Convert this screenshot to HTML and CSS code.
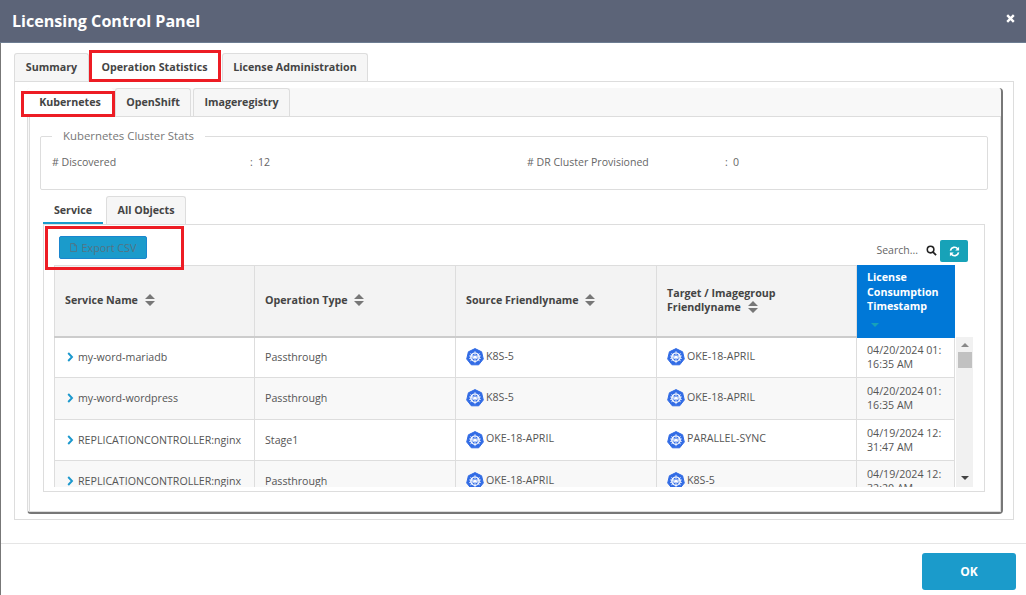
FILE: index.html
```html
<!DOCTYPE html>
<html lang="en">
<head>
<meta charset="utf-8">
<title>Licensing Control Panel</title>
<link rel="stylesheet" href="styles.css">
</head>
<body>
<svg class="defs" aria-hidden="true">
  <symbol id="k8s" viewBox="0 0 18 18">
    <path d="M9 .6 15.6 3.8 17.3 11 12.7 16.8H5.3L.7 11 2.4 3.8Z" fill="#326ce5" stroke="#326ce5" stroke-width="1" stroke-linejoin="round"/>
    <g fill="none" stroke="#fff">
      <circle cx="9" cy="9.2" r="4.2" stroke-width="1.2"/>
      <path d="M9 3.2V15.2M4.3 5.5 13.7 12.9M13.7 5.5 4.3 12.9M3.2 10.5 14.8 7.9M14.8 10.5 3.2 7.9" stroke-width=".8"/>
    </g>
    <circle cx="9" cy="9.2" r="1.2" fill="#fff"/>
  </symbol>
  <symbol id="sort" viewBox="0 0 10 12">
    <path d="M5 0 10 5H0ZM0 7H10L5 12Z" fill="#777"/>
  </symbol>
  <symbol id="chev" viewBox="0 0 7 10">
    <path d="M1.2 1 5 5 1.2 9" fill="none" stroke="#1b98cd" stroke-width="1.9"/>
  </symbol>
</svg>
<div class="modal">
  <header class="modal-header">
    <h1 class="modal-title">Licensing Control Panel</h1>
    <svg class="close" viewBox="0 0 9 9" aria-label="Close"><path d="M1.2 1.2 7.8 7.8M7.8 1.2 1.2 7.8" stroke="#fff" stroke-width="2.4"/></svg>
  </header>
  <main class="modal-body">
    <nav class="tabs">
      <a class="tab tab-summary">Summary</a>
      <a class="tab tab-op active">Operation Statistics<span class="mark"></span></a>
      <a class="tab tab-lic">License Administration</a>
    </nav>
    <section class="outer-panel">
      <div class="inner">
        <nav class="tabs sub-tabs">
          <a class="tab tab-k8s active-plain">Kubernetes<span class="mark mark-k8s"></span></a>
          <a class="tab tab-os">OpenShift</a>
          <a class="tab tab-img">Imageregistry</a>
        </nav>
        <div class="inner-content">
          <fieldset class="stats">
            <legend>Kubernetes Cluster Stats</legend>
            <div class="stats-grid">
              <div class="stat"><span class="stat-label"># Discovered</span><span class="stat-sep">:</span><span>12</span></div>
              <div class="stat"><span class="stat-label"># DR Cluster Provisioned</span><span class="stat-sep">:</span><span>0</span></div>
            </div>
          </fieldset>
          <nav class="tabs svc-tabs">
            <a class="tab tab-svc active">Service</a>
            <a class="tab tab-all">All Objects</a>
          </nav>
          <div class="svc-panel">
            <div class="toolbar">
              <button class="btn-export">
                <svg class="file-ic" viewBox="0 0 8 10"><path d="M.5.5H5L7.5 3V9.5H.5ZM5 .5V3H7.5" fill="none" stroke="#527484"/></svg>
                Export CSV
              </button>
              <span class="mark mark-export"></span>
              <span class="search">Search...</span>
              <svg class="search-ic" viewBox="0 0 12 12"><circle cx="5" cy="5" r="3.6" fill="none" stroke="#222" stroke-width="1.7"/><path d="M7.7 7.7 11 11" stroke="#222" stroke-width="2"/></svg>
              <button class="btn-refresh" aria-label="Refresh">
                <svg viewBox="0 0 12 12"><path d="M1.6 5A4.5 4.5 0 0 1 9.6 3.2M10.4 7A4.5 4.5 0 0 1 2.4 8.8" fill="none" stroke="#fff" stroke-width="1.8"/><path d="M11 .8V5H6.8ZM1 11.2V7H5.2Z" fill="#fff"/></svg>
              </button>
            </div>
            <div class="table-area">
              <table class="grid">
                <colgroup><col class="c1"><col class="c2"><col class="c3"><col class="c4"><col class="c5"></colgroup>
                <thead>
                  <tr>
                    <th><span class="th-in">Service Name <svg class="sort"><use href="#sort"/></svg></span></th>
                    <th><span class="th-in">Operation Type <svg class="sort"><use href="#sort"/></svg></span></th>
                    <th><span class="th-in">Source Friendlyname <svg class="sort"><use href="#sort"/></svg></span></th>
                    <th><span class="th-in">Target / Imagegroup<br>Friendlyname <svg class="sort"><use href="#sort"/></svg></span></th>
                    <th class="th-active">License Consumption Timestamp<span class="caret"></span></th>
                  </tr>
                </thead>
                <tbody>
                  <tr>
                    <td><span class="name"><svg class="chev"><use href="#chev"/></svg>my-word-mariadb</span></td>
                    <td>Passthrough</td>
                    <td><span class="cl"><svg class="k8s"><use href="#k8s"/></svg><span class="cl-t">K8S-5</span></span></td>
                    <td><span class="cl"><svg class="k8s"><use href="#k8s"/></svg><span class="cl-t">OKE-18-APRIL</span></span></td>
                    <td class="ts">04/20/2024 01:<br>16:35 AM</td>
                  </tr>
                  <tr>
                    <td><span class="name"><svg class="chev"><use href="#chev"/></svg>my-word-wordpress</span></td>
                    <td>Passthrough</td>
                    <td><span class="cl"><svg class="k8s"><use href="#k8s"/></svg><span class="cl-t">K8S-5</span></span></td>
                    <td><span class="cl"><svg class="k8s"><use href="#k8s"/></svg><span class="cl-t">OKE-18-APRIL</span></span></td>
                    <td class="ts">04/20/2024 01:<br>16:35 AM</td>
                  </tr>
                  <tr>
                    <td><span class="name"><svg class="chev"><use href="#chev"/></svg>REPLICATIONCONTROLLER:nginx</span></td>
                    <td>Stage1</td>
                    <td><span class="cl"><svg class="k8s"><use href="#k8s"/></svg><span class="cl-t">OKE-18-APRIL</span></span></td>
                    <td><span class="cl"><svg class="k8s"><use href="#k8s"/></svg><span class="cl-t">PARALLEL-SYNC</span></span></td>
                    <td class="ts">04/19/2024 12:<br>31:47 AM</td>
                  </tr>
                  <tr>
                    <td><span class="name"><svg class="chev"><use href="#chev"/></svg>REPLICATIONCONTROLLER:nginx</span></td>
                    <td>Passthrough</td>
                    <td><span class="cl"><svg class="k8s"><use href="#k8s"/></svg><span class="cl-t">OKE-18-APRIL</span></span></td>
                    <td><span class="cl"><svg class="k8s"><use href="#k8s"/></svg><span class="cl-t">K8S-5</span></span></td>
                    <td class="ts">04/19/2024 12:<br>32:20 AM</td>
                  </tr>
                </tbody>
              </table>
              <div class="scrollbar">
                <span class="arrow-up"></span>
                <span class="thumb"></span>
                <span class="arrow-down"></span>
              </div>
            </div>
          </div>
        </div>
      </div>
    </section>
  </main>
  <footer class="modal-footer">
    <button class="btn-ok">OK</button>
  </footer>
</div>
</body>
</html>
```

FILE: styles.css
```css
* { box-sizing: border-box; }
html, body { margin: 0; height: 100%; }
body {
  overflow: hidden;
  background: #fff;
  font-family: "Open Sans", "Liberation Sans", sans-serif;
  color: #555;
}
.defs { position: absolute; width: 0; height: 0; }
.modal {
  display: flex;
  flex-direction: column;
  width: 1026px;
  height: 595px;
  border-left: 1px solid #777;
}
.modal-header {
  display: flex;
  align-items: center;
  justify-content: space-between;
  height: 43px;
  margin-left: -1px;
  padding: 0 11px 0 12px;
  background: #5c6478;
  border-bottom: 1px solid #6d7d92;
}
.modal-title {
  margin: 0 0 1px;
  font-size: 16.1px;
  font-weight: 700;
  color: #fff;
}
.close { width: 9px; height: 9px; margin-bottom: 5px; }
.modal-body { padding: 10px 12px 0 13px; height: 500px; }
.tabs { display: flex; height: 28px; }
.tab {
  position: relative;
  display: flex;
  align-items: center;
  justify-content: center;
  height: 28px;
  padding-bottom: 1px;
  background: #f6f6f6;
  border: 1px solid #ddd;
  border-bottom: 0;
  border-radius: 3px 3px 0 0;
  font-size: 10.7px;
  font-weight: 700;
  color: #444;
}
.tab.active { padding: 2px 0 0; background: #fff; border: 0; border-bottom: 2px solid #1b9bcb; border-radius: 0; }
.tab.active-plain { padding: 0; background: #fff; border: 0; }
.tab-summary { width: 75px; }
.tab-op { width: 131px; margin-right: 2px; }
.tab-lic { width: 146px; }
.tab-k8s { width: 86px; margin-right: 2px; }
.tab-os { width: 76px; margin-right: 2px; }
.tab-img { width: 97px; }
.tab-svc { width: 60px; margin-right: 3px; }
.tab-all { width: 80px; }
.mark { position: absolute; border: 3px solid #ed1c24; pointer-events: none; }
.tab-op .mark { inset: -3px -1px -3px 0; }
.tab-k8s .mark-k8s { inset: 3px -2px -1px -6px; }
.mark-export { left: 1px; top: 1px; width: 139px; height: 44px; }
.outer-panel {
  height: 439px;
  padding: 6px 10px 5px 12px;
  border: 1px solid #ddd;
}
.inner {
  height: 100%;
  border-left: 1px solid #ddd;
  border-right: 2px solid #777;
  border-bottom: 2px solid #777;
  border-radius: 4px;
  background: #f8f8f8;
}
.sub-tabs { margin-left: -1px; }
.inner-content {
  height: 396px;
  margin-left: 1px;
  padding: 19px 12px 0 10px;
  background: #fff;
  border: 1px solid #ddd;
}
.stats {
  height: 54px;
  margin: 0 0 6px;
  padding: 0 0 0 11px;
  min-width: 0;
  border: 1px solid #ddd;
  border-radius: 2px;
}
.stats legend {
  margin-left: 0;
  padding: 0 11px;
  font-size: 11.4px;
  color: #777;
  line-height: 0;
  height: 1px;
}
.stats-grid {
  display: grid;
  grid-template-columns: 475px 1fr;
  padding-top: 18px;
  font-size: 10.55px;
  line-height: 14px;
  color: #666;
}
.stat { display: flex; }
.stat-label { width: 198px; }
.stat-sep { width: 8px; }
.svc-tabs { margin-left: 3px; }
.svc-panel {
  margin-left: 3px;
  width: 942px;
  height: 268px;
  padding: 0 0 5px 10px;
  border: 1px solid #ddd;
}
.toolbar {
  position: relative;
  display: flex;
  align-items: flex-start;
  height: 40px;
  margin-left: -10px;
  padding-right: 16px;
}
.btn-export {
  display: flex;
  align-items: center;
  justify-content: center;
  gap: 5px;
  width: 88px;
  height: 23px;
  margin: 11px 0 0 15px;
  padding: 0;
  background: #1b9bcb;
  border: 1px solid #1a86cf;
  border-radius: 2px;
  font: 400 10.8px "Open Sans", sans-serif;
  color: #527484;
}
.file-ic { width: 7px; height: 9px; }
.search {
  margin: 18px 0 0 auto;
  font-size: 10.5px;
  line-height: 15px;
  color: #666;
}
.search-ic { width: 11px; height: 11px; margin: 20px 3px 0 8px; }
.btn-refresh {
  display: flex;
  align-items: center;
  justify-content: center;
  width: 28px;
  height: 22px;
  margin-top: 15px;
  padding: 0;
  background: #17a2b8;
  border: 0;
  border-radius: 2px;
}
.btn-refresh svg { width: 11px; height: 11px; }
.table-area { display: flex; height: 222px; overflow: hidden; }
.grid {
  width: 900px;
  flex: none;
  align-self: flex-start;
  table-layout: fixed;
  border-collapse: collapse;
}
.c1 { width: 200px; }
.c2 { width: 201px; }
.c3 { width: 201px; }
.c4 { width: 200px; }
.c5 { width: 98px; }
.grid th {
  height: 71px;
  padding: 0 10px 2px;
  background: #f3f3f3;
  border: 1px solid #ddd;
  border-bottom: 2px solid #ccc;
  text-align: left;
  font-size: 10.7px;
  font-weight: 700;
  line-height: 14px;
  color: #444;
}
.sort { width: 10px; height: 12px; margin-left: 4px; vertical-align: -2px; }
.grid .th-active {
  position: relative;
  padding: 4px 10px 0;
  vertical-align: top;
  background: #0078d7;
  border-color: #0078d7;
  color: #fff;
  line-height: 14.6px;
}
.caret {
  display: block;
  width: 0;
  margin: 9px 0 0 4px;
  border-style: solid;
  border-width: 4px 4px 0;
  border-color: #17a2b8 transparent transparent;
}
.grid td {
  height: 41.3px;
  padding: 0 10px;
  border: 1px solid #ddd;
  font-size: 10.65px;
  line-height: 14px;
  color: #555;
  white-space: nowrap;
}
.grid tbody tr:nth-child(even) td { background: #f8f8f8; }
.name { display: flex; align-items: center; margin-left: 2px; }
.chev { width: 7px; height: 10px; margin-right: 4px; flex: none; }
.cl { display: flex; align-items: center; }
.k8s { width: 18px; height: 18px; flex: none; margin-right: 2px; }
.cl-t { margin-bottom: 3px; }
.scrollbar {
  position: relative;
  display: flex;
  flex-direction: column;
  align-items: center;
  width: 17px;
  height: 150px;
  margin: 72px 0 0 1px;
  padding-top: 6px;
  background: #f1f1f1;
}
.arrow-up { border: solid transparent; border-width: 0 4px 4px; border-bottom-color: #888; }
.thumb { width: 14px; height: 16px; margin-top: 5px; background: #c1c1c1; }
.arrow-down { margin-top: auto; margin-bottom: 7px; border: solid transparent; border-width: 4px 4px 0; border-top-color: #444; }
.modal-footer {
  flex: 1;
  display: flex;
  justify-content: flex-end;
  align-items: flex-start;
  padding: 9px 10px 0 0;
  border-top: 1px solid #e5e5e5;
}
.btn-ok {
  width: 94px;
  height: 37px;
  background: #1b9bcb;
  border: 0;
  border-radius: 3px;
  font: 700 12px "Open Sans", sans-serif;
  color: #fff;
}
```
